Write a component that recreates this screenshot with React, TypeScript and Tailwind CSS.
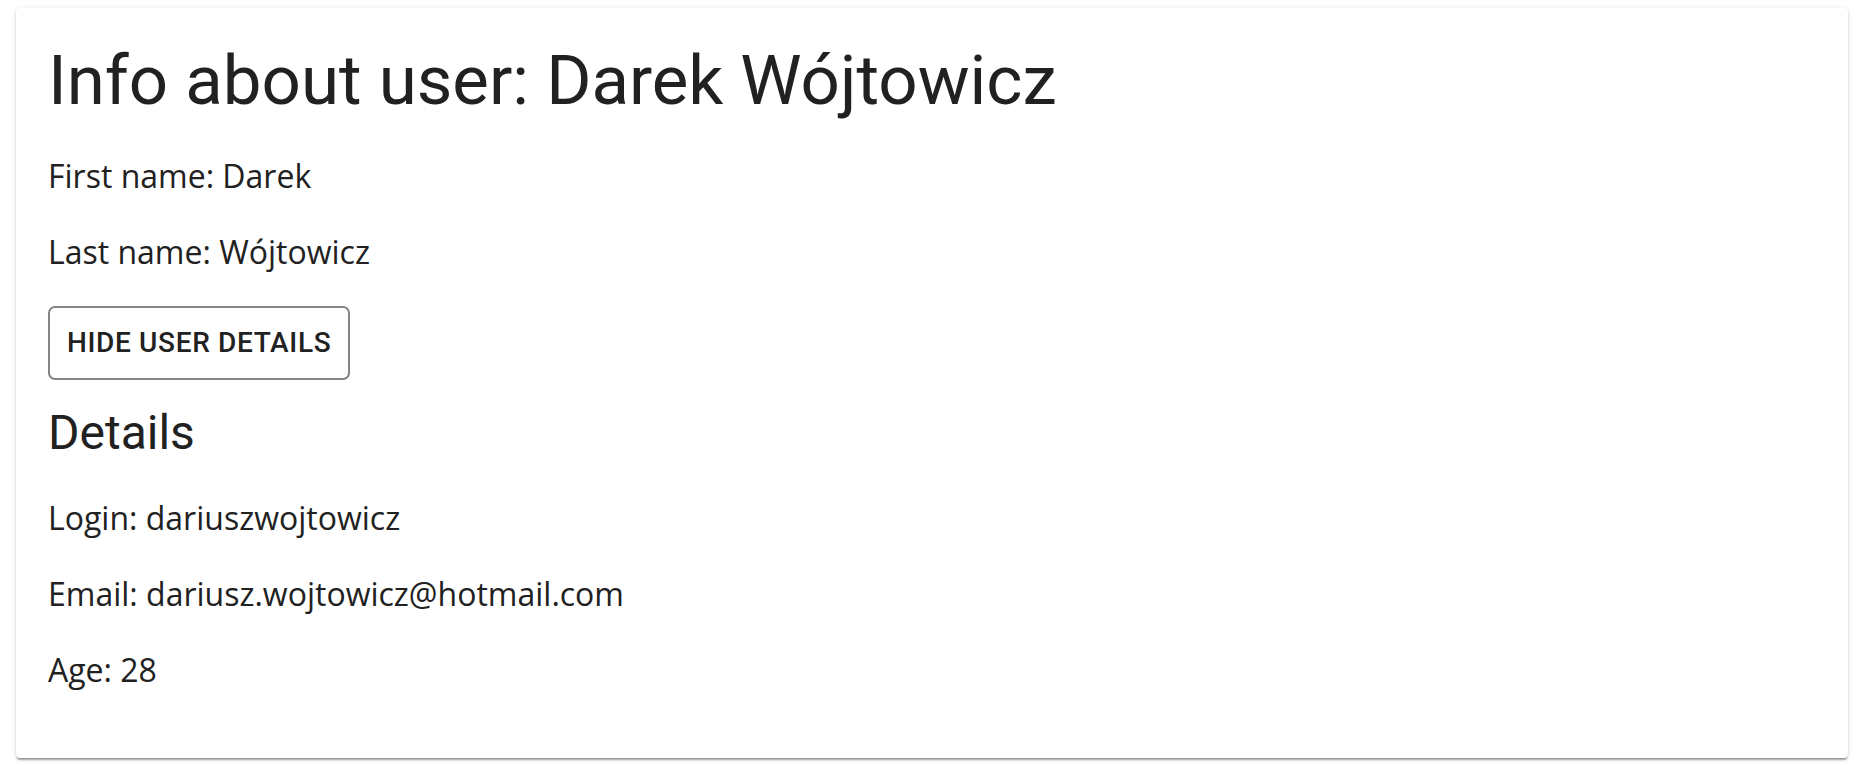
const body = "font-['Open_Sans','Liberation_Sans',sans-serif] text-[32px] leading-[48px]";

export default function App() {
  return (
    <div className="min-h-screen bg-white pt-[8px] pl-4 pr-[10px] text-[#212121]">
      <div className="h-[750px] rounded-[4px] bg-white px-[32px] flex flex-col items-start shadow-[0_3px_2px_-1px_rgba(0,0,0,0.3),0_1px_2px_0_rgba(0,0,0,0.12),0_1px_6px_0_rgba(0,0,0,0.1)]">
        <h1 className="mt-[32px] font-['Roboto','Liberation_Sans',sans-serif] text-[69px] leading-[1.2] font-normal">
          Info about user: Darek Wójtowicz
        </h1>
        <p className={`mt-[29px] ${body}`}>First name: Darek</p>
        <p className={`mt-[28px] ${body}`}>Last name: Wójtowicz</p>
        <button className="mt-[30px] h-[74px] px-[17px] rounded-[7px] border-2 border-[#858585] font-['Roboto','Liberation_Sans',sans-serif] text-[28px] font-medium uppercase tracking-[0.65px] text-[#212121]">
          Hide user details
        </button>
        <h2 className="mt-[24px] font-['Roboto','Liberation_Sans',sans-serif] text-[48px] leading-[1.2] font-normal">
          Details
        </h2>
        <p className={`mt-[33px] ${body}`}>Login: dariuszwojtowicz</p>
        <p className={`mt-[28px] ${body}`}>Email: dariusz.wojtowicz@hotmail.com</p>
        <p className={`mt-[28px] ${body}`}>Age: 28</p>
      </div>
    </div>
  );
}
